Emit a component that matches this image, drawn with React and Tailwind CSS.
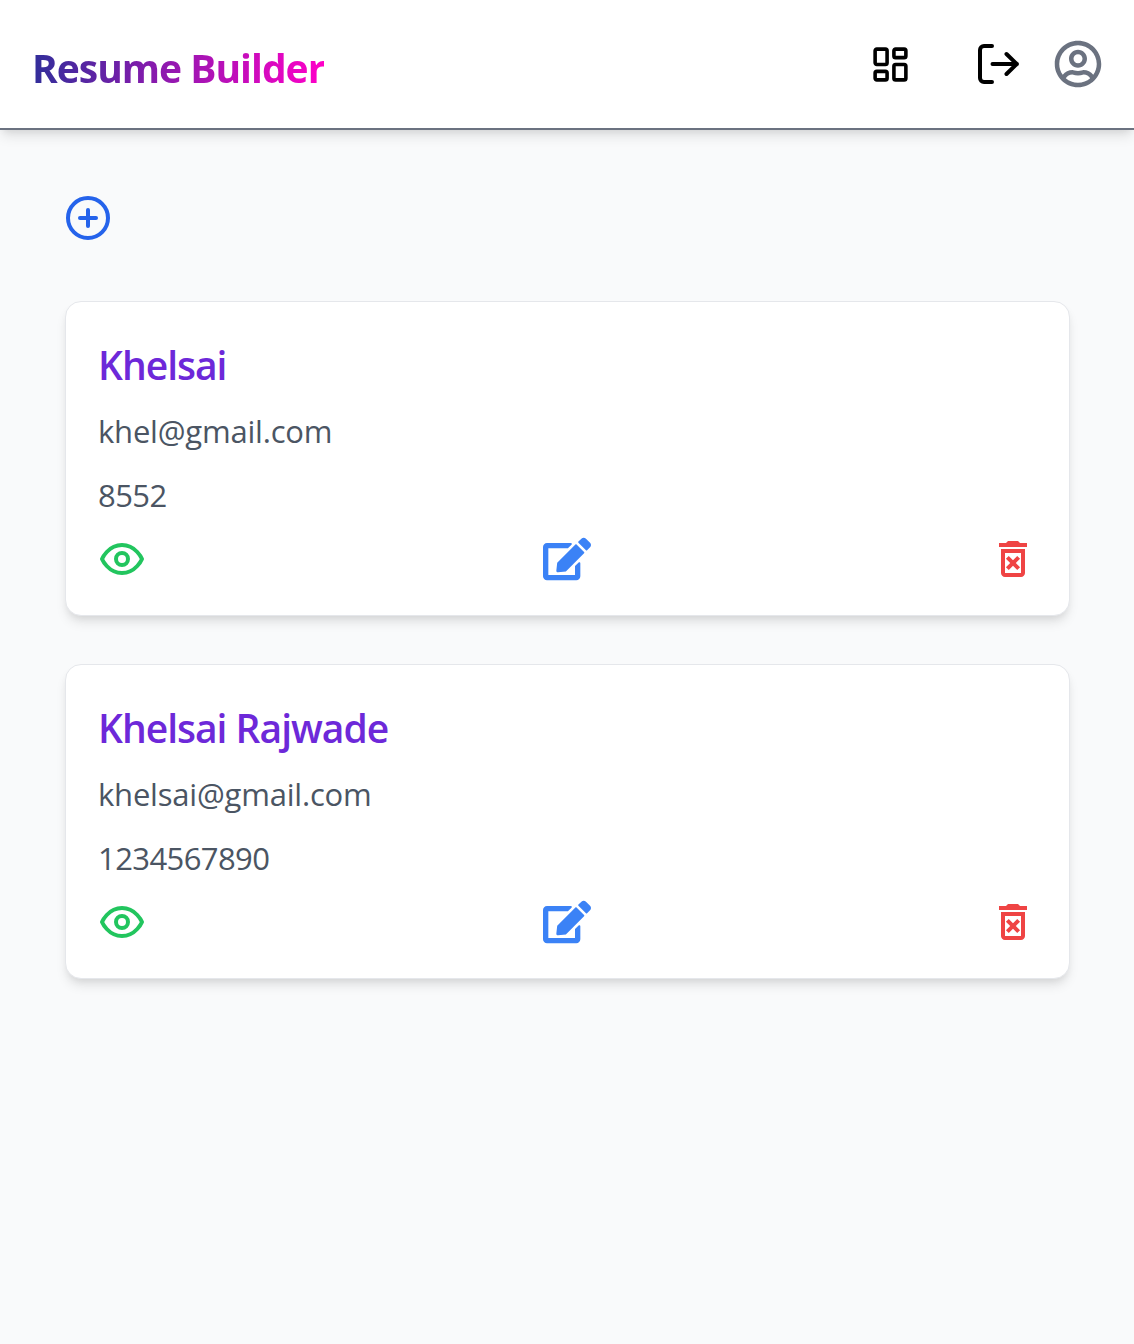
import React from "react";
import { CirclePlus } from "lucide-react";
import { FaEdit, FaRegUserCircle } from "react-icons/fa";
import { MdOutlineDeleteForever } from "react-icons/md";

const resumes = [
  { name: "Khelsai", email: "khel@gmail.com", phone: "8552" },
  { name: "Khelsai Rajwade", email: "khelsai@gmail.com", phone: "1234567890" },
];

function DashboardIcon() {
  return (
    <svg className="size-[41px]" viewBox="0 0 24 24" fill="none" stroke="currentColor" strokeWidth="2.1" strokeLinecap="round" strokeLinejoin="round">
      <rect x="3" y="3" width="7" height="9" rx="1" />
      <rect x="14" y="3" width="7" height="5" rx="1" />
      <rect x="14" y="12" width="7" height="9" rx="1" />
      <rect x="3" y="16" width="7" height="5" rx="1" />
    </svg>
  );
}

function SignOutIcon() {
  return (
    <svg className="size-12" viewBox="0 0 48 48" fill="none" stroke="currentColor" strokeWidth="4" strokeLinecap="round" strokeLinejoin="round">
      <path d="M18 6h-8a4 4 0 0 0-4 4v28a4 4 0 0 0 4 4h8" />
      <path d="M18.5 24H43M32.5 14l10.3 10-10.3 10" />
    </svg>
  );
}

function EyeIcon() {
  return (
    <svg className="size-12 text-[#22c55e]" viewBox="0 0 24 24" fill="none" stroke="currentColor" strokeWidth="2" strokeLinecap="round" strokeLinejoin="round">
      <path d="M2 12s3-7 10-7 10 7 10 7-3 7-10 7-10-7-10-7Z" />
      <circle cx="12" cy="12" r="3" />
    </svg>
  );
}

function ResumeCard({ name, email, phone }) {
  return (
    <article className="h-[315px] rounded-2xl border border-[#e5e7eb] bg-white px-8 pt-[33px] shadow-[0_8px_12px_-2px_rgba(0,0,0,0.1),0_4px_8px_-4px_rgba(0,0,0,0.1)]">
      <h2 className="h-14 w-fit text-[39px] leading-[60px] font-semibold tracking-[-1px] text-[#6d28d9]">{name}</h2>
      <p className="mt-4 h-12 w-fit text-[31px] leading-[48px] tracking-[-0.2px] text-[#4b5563]">{email}</p>
      <p className="mt-4 h-12 w-fit text-[31px] leading-[48px] tracking-[-0.6px] text-[#4b5563]">{phone}</p>
      <div className="mt-[15.5px] -ml-[0.5px] flex items-center justify-between">
        <button aria-label="View"><EyeIcon /></button>
        <button aria-label="Edit"><FaEdit className="size-12 text-[#3b82f6]" /></button>
        <button aria-label="Delete"><MdOutlineDeleteForever className="size-12 text-[#ef4444]" /></button>
      </div>
    </article>
  );
}

export default function App() {
  return (
    <div className="min-h-[1344px] bg-[#f9fafb] font-['Open_Sans','Noto_Sans',sans-serif]">
      <header className="flex h-[130px] items-center justify-between border-b-2 border-[#6b7280] bg-white pr-8 pl-8 shadow-[0_8px_12px_-2px_rgba(0,0,0,0.1),0_4px_8px_-4px_rgba(0,0,0,0.1)]">
        <h1 className="mt-2 bg-linear-to-r/srgb from-[#312e9a] to-[#ff00c8] bg-clip-text text-[39px] leading-[60px] font-bold tracking-[-1px] text-transparent">Resume Builder</h1>
        <nav className="flex items-center text-black">
          <button aria-label="Dashboard" className="mr-[63px] mt-px"><DashboardIcon /></button>
          <button aria-label="Sign out" className="mr-8"><SignOutIcon /></button>
          <button aria-label="Account"><FaRegUserCircle className="size-12 text-[#6b7280]" /></button>
        </nav>
      </header>
      <main className="pt-[63.5px] pr-16 pl-[65px]">
        <button aria-label="Add resume" className="-ml-px block"><CirclePlus className="size-12 text-[#2563eb]" strokeWidth={2} /></button>
        <section className="mt-[59.5px] flex flex-col gap-12">
          {resumes.map((r) => <ResumeCard key={r.name} {...r} />)}
        </section>
      </main>
    </div>
  );
}
